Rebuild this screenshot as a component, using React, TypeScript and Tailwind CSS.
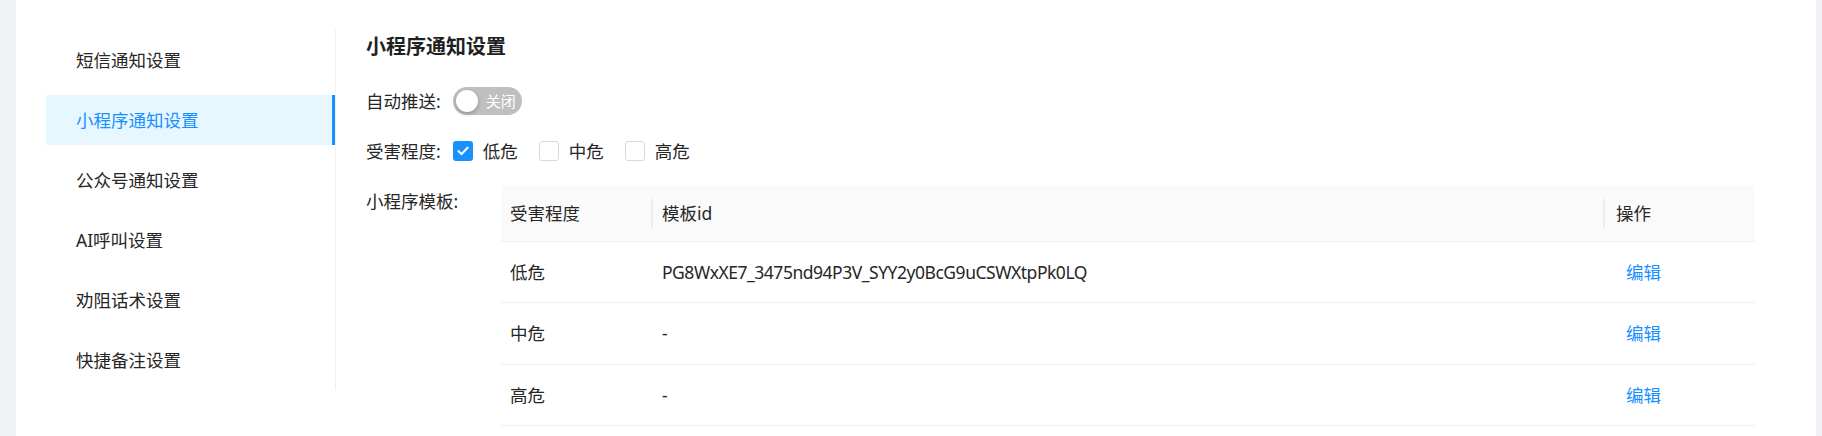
const menuItems = ['短信通知设置', '小程序通知设置', '公众号通知设置', 'AI呼叫设置', '劝阻话术设置', '快捷备注设置'];

const levels = [
  { name: '低危', checked: true },
  { name: '中危', checked: false },
  { name: '高危', checked: false },
];

const rows = [
  { level: '低危', templateId: 'PG8WxXE7_3475nd94P3V_SYY2y0BcG9uCSWXtpPk0LQ' },
  { level: '中危', templateId: '-' },
  { level: '高危', templateId: '-' },
];

function Checkbox({ checked }: { checked: boolean }) {
  return checked ? (
    <span className="w-[20px] h-[20px] rounded-[3px] bg-[#1890ff] flex items-center justify-center shrink-0">
      <svg width="12" height="10" viewBox="0 0 12 10" fill="none">
        <path d="M1.5 5.2 L4.6 8 L10.5 1.8" stroke="white" strokeWidth="2" strokeLinecap="square" />
      </svg>
    </span>
  ) : (
    <span className="w-[20px] h-[20px] rounded-[3px] border border-[#d9d9d9] bg-white shrink-0" />
  );
}

export default function App() {
  const active = 1;
  return (
    <div
      className="flex w-full h-[436px] bg-[#f0f2f5] text-[17.5px] text-[#262626]"
      style={{ fontFamily: '"Noto Sans", "Noto Sans CJK SC", sans-serif' }}
    >
      <div className="w-[16px] shrink-0" />
      <div className="flex-1 bg-white flex pt-[30px] pl-[30px] pr-[61px]">
        <div className="w-[290px] h-[360px] shrink-0 border-r border-[#f0f0f0] flex flex-col gap-[10px] py-[5px]">
          {menuItems.map((item, i) => (
            <div
              key={item}
              className={
                i === active
                  ? 'h-[50px] flex items-center pl-[30px] bg-[#e6f7ff] text-[#1890ff] border-r-[3px] border-[#1890ff]'
                  : 'h-[50px] flex items-center pl-[30px] text-[#262626]'
              }
            >
              {item}
            </div>
          ))}
        </div>

        <div className="flex-1 pl-[30px]">
          <h2 className="text-[20px] font-bold leading-[34px] h-[34px] text-[#1f1f1f]">小程序通知设置</h2>

          <div className="flex items-center h-[28px] mt-[23px]">
            <span>自动推送:</span>
            <div className="ml-[12px] w-[69px] h-[28px] rounded-full bg-[#bfbfbf] flex items-center pl-[3px]">
              <span className="w-[22px] h-[22px] rounded-full bg-white shadow-[0_2px_4px_rgba(0,35,11,0.25)]" />
              <span className="ml-[8px] text-[15px] text-white leading-none">关闭</span>
            </div>
          </div>

          <div className="flex items-center h-[28px] mt-[22px]">
            <span>受害程度:</span>
            <div className="ml-[12px] flex items-center gap-[21px]">
              {levels.map((l) => (
                <label key={l.name} className="flex items-center gap-[10px]">
                  <Checkbox checked={l.checked} />
                  <span>{l.name}</span>
                </label>
              ))}
            </div>
          </div>

          <div className="flex mt-[20px]">
            <span className="w-[135px] shrink-0 pt-[4px] leading-[24px]">小程序模板:</span>
            <div className="flex-1">
              <div className="flex h-[57px] bg-[#fafafa] border-b border-[#f0f0f0] items-center">
                <div className="w-[150px] pl-[9px]">受害程度</div>
                <div className="w-[2px] h-[28px] bg-[#ebebeb]" />
                <div className="flex-1 pl-[9px]">模板id</div>
                <div className="w-[2px] h-[28px] bg-[#ebebeb]" />
                <div className="w-[150px] pl-[11px]">操作</div>
              </div>
              {rows.map((r) => (
                <div key={r.level} className="flex h-[61.4px] border-b border-[#f0f0f0] items-center">
                  <div className="w-[150px] pl-[9px]">{r.level}</div>
                  <div className="w-[2px]" />
                  <div className="flex-1 pl-[9px] tracking-[-0.48px]">{r.templateId}</div>
                  <div className="w-[2px]" />
                  <div className="w-[150px] pl-[21px] text-[#1890ff]">编辑</div>
                </div>
              ))}
            </div>
          </div>
        </div>
      </div>
      <div className="w-[6px] shrink-0" />
    </div>
  );
}
